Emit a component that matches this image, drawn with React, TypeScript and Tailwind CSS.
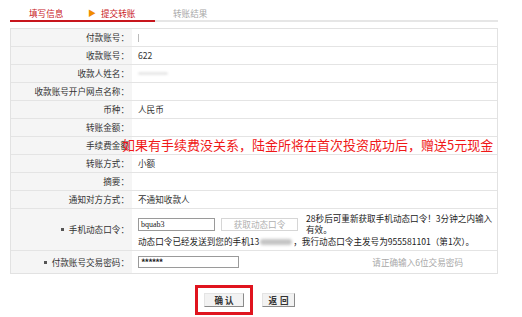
const rows = [
  { label: '付款账号：', value: <span className="inline-block h-[8px] w-px bg-[#bbb]" /> },
  { label: '收款账号：', value: '622' },
  { label: '收款人姓名：', value: <span className="inline-block h-[3px] w-[30px] rounded bg-[#e8e8e8] blur-[1px]" /> },
  { label: '收款账号开户网点名称：', value: '' },
  { label: '币种：', value: '人民币' },
  { label: '转账金额：', value: '' },
  { label: '手续费金额', value: '' },
  { label: '转账方式：', value: '小额' },
  { label: '摘要：', value: '' },
  { label: '通知对方方式：', value: '不通知收款人' },
];

const font = { fontFamily: '"Noto Sans CJK SC", "Noto Sans", sans-serif' };

function Bullet() {
  return <span className="mr-[5px] inline-block h-[3px] w-[3px] bg-[#555] align-middle" />;
}

export default function App() {
  return (
    <div className="relative h-[317px] w-[522px] overflow-hidden bg-white text-[8.6px] text-[#333]" style={font}>
      {/* steps */}
      <div className="ml-[10px] w-[488px]">
        <div className="flex h-[20px] items-end pb-[1px] leading-[12px]">
          <span className="ml-[19px] w-[59px] text-[#c8161d]">填写信息</span>
          <span className="w-[13px] text-[8px] text-[#f08c00]">▶</span>
          <span className="w-[72px] text-[#c8161d]">提交转账</span>
          <span className="text-[#a8a8a8]">转账结果</span>
        </div>
        <div className="flex h-[2px]">
          <div className="w-[145px] bg-[#c8161d]" />
          <div className="flex-1 bg-[#e6e6e6]" />
        </div>
      </div>

      {/* table */}
      <div className="ml-[10px] mt-[6px] w-[488px] border border-[#e2e2e2]">
        {rows.map((r) => (
          <div key={r.label} className="flex h-[18px] border-b border-[#e4e4e4]">
            <div className="flex w-[121px] items-center justify-end bg-[#f5f5f5] pr-[3px]">{r.label}</div>
            <div className="flex flex-1 items-center pl-[6px]">{r.value}</div>
          </div>
        ))}

        <div className="flex h-[42px] border-b border-[#e4e4e4]">
          <div className="flex w-[121px] items-center justify-end bg-[#f5f5f5] pr-[3px]">
            <Bullet />
            手机动态口令：
          </div>
          <div className="flex flex-1 flex-col pl-[6px] pt-[4px] leading-[11px]">
            <div className="flex items-start">
              <div className="mt-[5px] flex h-[13px] w-[77px] items-center border border-[#9a9a9a] pl-[2px] text-[8px] text-[#222]" style={{ fontFamily: '"Liberation Serif", serif' }}>
                bquab3
              </div>
              <div className="ml-[6px] mt-[5px] flex h-[13px] w-[77px] items-center justify-center border border-[#d6d6d6] text-[#b0b0b0]">
                获取动态口令
              </div>
              <div className="ml-[8px] w-[190px] text-[#222]">28秒后可重新获取手机动态口令！3分钟之内输入有效。</div>
            </div>
            <div className="mt-[1px] flex items-center whitespace-nowrap text-[#222]">
              动态口令已经发送到您的手机13
              <span className="mx-[1px] inline-block h-[6px] w-[32px] rounded bg-[#c4c4c4] blur-[1.5px]" />
              ，我行动态口令主发号为955581101（第1次）。
            </div>
          </div>
        </div>

        <div className="flex h-[22px]">
          <div className="flex w-[121px] items-center justify-end bg-[#f5f5f5] pr-[3px]">
            <Bullet />
            付款账号交易密码：
          </div>
          <div className="flex flex-1 items-center justify-between pl-[6px] pr-[34px]">
            <div className="flex h-[12px] w-[101px] items-center border border-[#9a9a9a] pl-[2px] text-[9px] font-bold leading-none tracking-[-1px] text-[#222]">
              ******
            </div>
            <span className="text-[#a8a8a8]">请正确输入6位交易密码</span>
          </div>
        </div>
      </div>

      {/* buttons */}
      <div className="mt-[11px] flex items-center pl-[195px]">
        <div className="flex h-[30px] w-[58px] items-center justify-center border-[3px] border-[#e0141e]">
          <button className="h-[14px] w-[40px] border border-[#e4e4e4] border-b-[#8a8a8a] border-r-[#8a8a8a] bg-[#f2f2f2] text-[8.6px] font-bold leading-none text-[#333]">
            确 认
          </button>
        </div>
        <button className="ml-[9px] flex h-[14px] w-[33px] items-center justify-center gap-[3px] border border-[#e4e4e4] border-b-[#8a8a8a] border-r-[#8a8a8a] bg-[#f2f2f2] text-[8.6px] font-bold leading-none text-[#333]">
          <span>返</span>
          <span>回</span>
        </button>
      </div>

      {/* red overlay note */}
      <div className="absolute left-[122px] top-[136px] whitespace-nowrap text-[13px] leading-[18px] text-[#f01818]">
        如果有手续费没关系，陆金所将在首次投资成功后，赠送5元现金
      </div>
    </div>
  );
}
